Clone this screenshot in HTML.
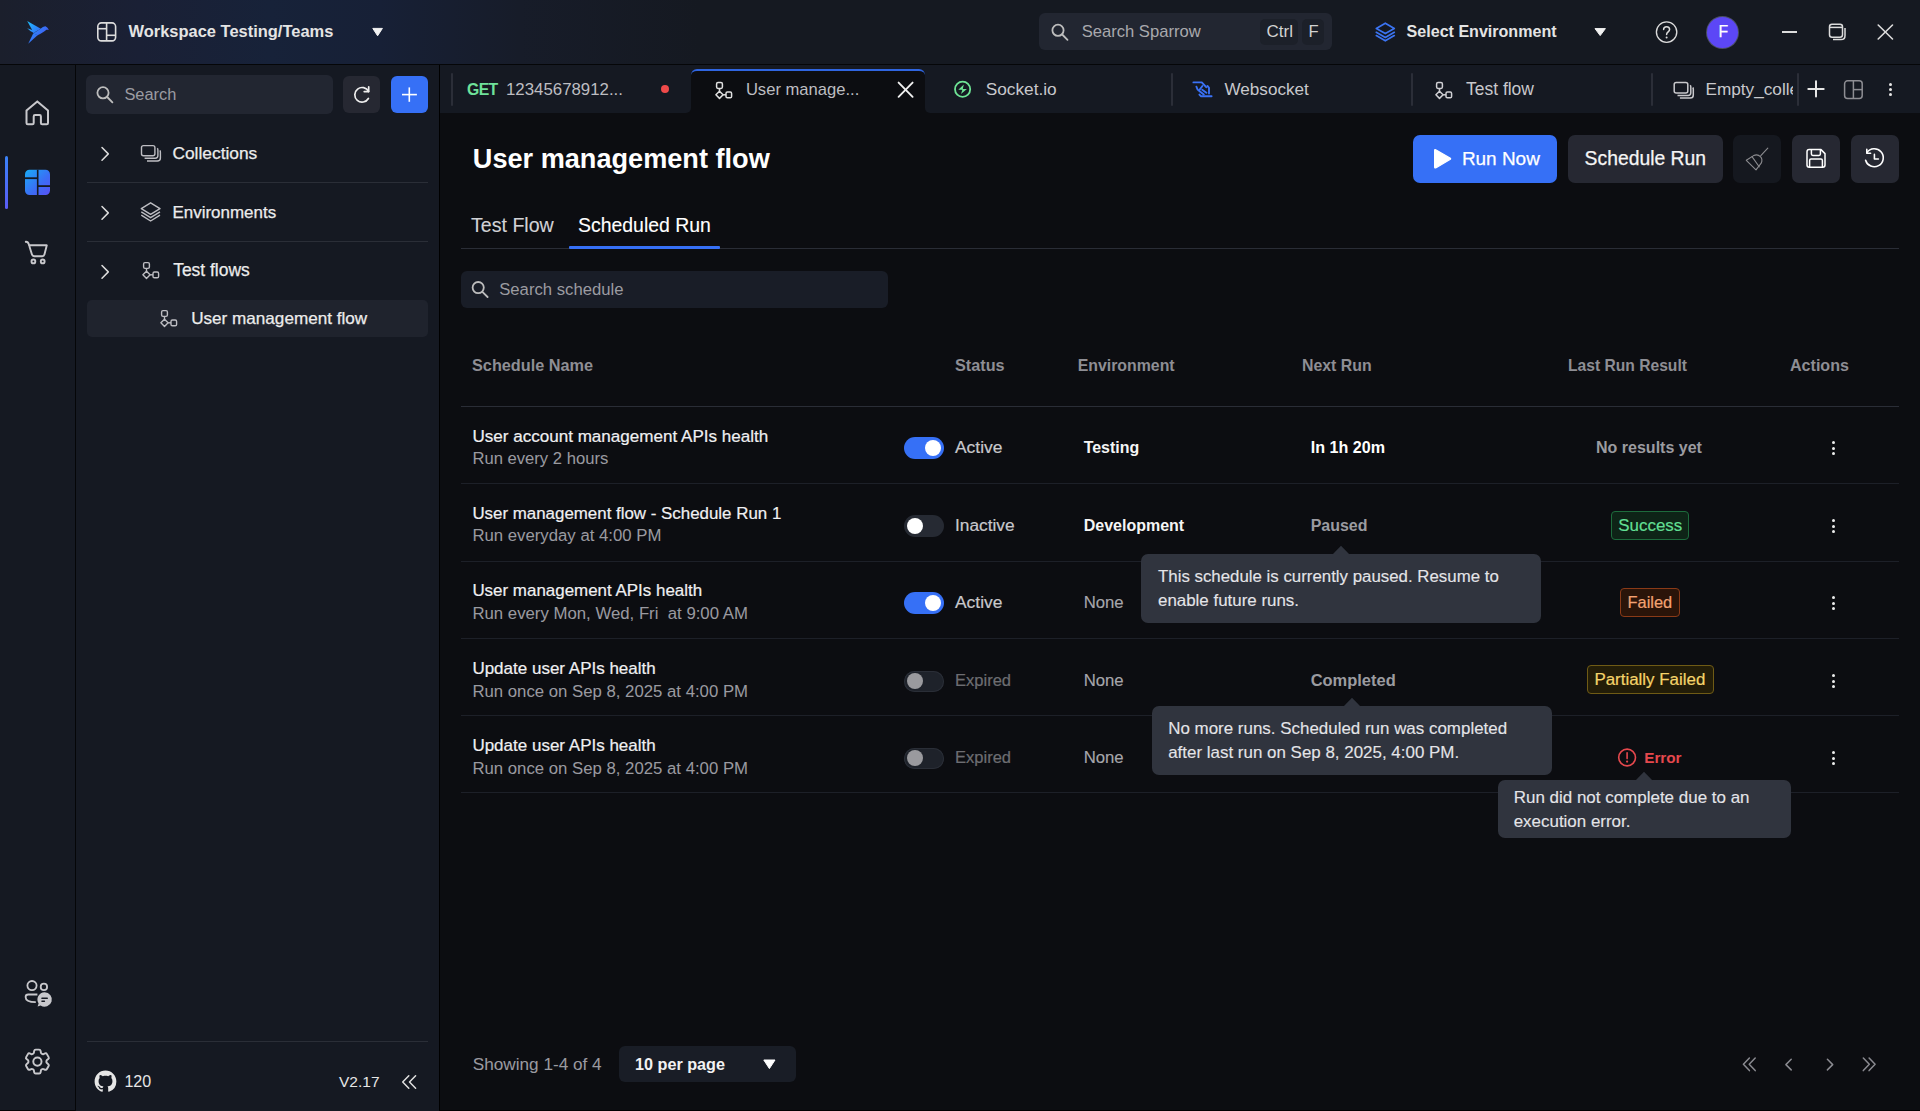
<!DOCTYPE html>
<html><head><meta charset="utf-8"><title>Sparrow</title>
<style>
html,body{margin:0;padding:0;width:1920px;height:1111px;overflow:hidden;background:#0c0d11;font-family:"Liberation Sans", sans-serif;}
.t{position:absolute;white-space:nowrap;line-height:1;font-family:"Liberation Sans", sans-serif;}
.r{position:absolute;}
.s{position:absolute;overflow:visible;}
</style></head><body>
<div class="r" style="left:0px;top:0px;width:1920px;height:64px;background:linear-gradient(90deg,#1b1f2c 0px,#1a2035 140px,#172239 270px,#172036 380px,#171c29 520px,#151921 700px,#151921 100%);border-radius:0px;"></div>
<div class="r" style="left:0px;top:64px;width:1920px;height:1px;background:#050608;border-radius:0px;"></div>
<div class="r" style="left:0px;top:65px;width:75px;height:1046px;background:#151922;border-radius:0px;"></div>
<div class="r" style="left:75px;top:65px;width:1px;height:1046px;background:#050608;border-radius:0px;"></div>
<div class="r" style="left:0px;top:1110px;width:75px;height:1px;background:#030405;border-radius:0px;"></div>
<div class="r" style="left:76px;top:65px;width:363px;height:1046px;background:#151922;border-radius:0px;"></div>
<div class="r" style="left:439px;top:65px;width:1px;height:1046px;background:#000000;border-radius:0px;"></div>
<div class="r" style="left:440px;top:65px;width:251px;height:48px;background:#151922;border-radius:0px;border-radius:0 0 5px 0"></div>
<div class="r" style="left:925px;top:65px;width:995px;height:48px;background:#151922;border-radius:0px;border-radius:0 0 0 5px"></div>
<div class="r" style="left:691px;top:65px;width:234px;height:16px;background:#151922;border-radius:0px;"></div>
<div class="r" style="left:440px;top:113px;width:1480px;height:998px;background:#0c0d11;border-radius:0px;"></div>
<div class="r" style="left:440px;top:1110px;width:1480px;height:1px;background:#000000;border-radius:0px;"></div>
<svg class="s" style="left:20px;top:15px;" width="40" height="35" viewBox="0 0 40 35" fill="none"><defs><linearGradient id="bg1" gradientUnits="userSpaceOnUse" x1="27" y1="21" x2="47" y2="38"><stop offset="0" stop-color="#1cc4ff"/><stop offset="0.5" stop-color="#2f7ff8"/><stop offset="1" stop-color="#4a52f3"/></linearGradient></defs>
<g fill="url(#bg1)" transform="translate(-20,-15)">
<path d="M27.2 21.1 L40.8 28.7 L36 31.6 L33.8 32.9 Z"/>
<path d="M27.2 28.2 L35.2 30.9 L33.8 33.1 Q30 31.2 27.2 28.2 Z"/>
<path d="M33.2 33.6 L40.6 28.8 Q43 26.1 45.4 26.2 Q47.3 26.7 48.9 29.7 L46.3 29.8 Q44 32.2 37.6 35.2 Z"/>
<path d="M33.2 33.4 L37.8 35.1 L28.2 43.8 Z"/>
</g></svg>
<svg class="s" style="left:96px;top:21px;" width="22" height="22" viewBox="0 0 22 22" fill="none"><g stroke="#dcdcdc" stroke-width="1.6" transform="translate(-96,-21)"><rect x="97.8" y="22.9" width="17.8" height="18" rx="3.6"/><line x1="106.6" y1="22.9" x2="106.6" y2="40.9"/><line x1="97.8" y1="28.7" x2="106.6" y2="28.7"/><line x1="106.6" y1="35.3" x2="115.6" y2="35.3"/></g></svg>
<div class="t" style="left:128.5px;top:23px;font-size:16.47px;font-weight:700;color:#e4e4e4;">Workspace Testing/Teams</div>
<svg class="s" style="left:371px;top:27px;" width="13" height="10" viewBox="0 0 13 10" fill="none"><path d="M1.8 1.4 H11.4 L6.6 8.8 Z" fill="#f2f2f2" stroke="#f2f2f2" stroke-width="1" stroke-linejoin="round"/></svg>
<div class="r" style="left:1039px;top:13px;width:293px;height:37px;background:#222631;border-radius:6px;"></div>
<svg class="s" style="left:1050px;top:22px;" width="20" height="20" viewBox="0 0 20 20" fill="none"><g stroke="#bdbdbd" stroke-width="1.8" stroke-linecap="round"><circle cx="8" cy="8.3" r="5.6"/><line x1="12.2" y1="12.5" x2="17.5" y2="17.8"/></g></svg>
<div class="t" style="left:1081.7px;top:24px;font-size:16.60px;font-weight:400;color:#a9a9ad;">Search Sparrow</div>
<div class="r" style="left:1260px;top:19px;width:38px;height:26px;background:#1c2029;border-radius:5px;"></div>
<div class="r" style="left:1302px;top:19px;width:22px;height:26px;background:#1c2029;border-radius:5px;"></div>
<div class="t" style="left:1266.5px;top:23px;font-size:17.00px;font-weight:400;color:#d2d2d2;">Ctrl</div>
<div class="t" style="left:1308.5px;top:24px;font-size:16.60px;font-weight:400;color:#d2d2d2;">F</div>
<svg class="s" style="left:1372px;top:19px;" width="26" height="26" viewBox="0 0 26 26" fill="none"><g stroke="#3b74f2" stroke-width="1.7" stroke-linejoin="round" stroke-linecap="round" transform="translate(-1372,-19)"><path d="M1385.3 23.2 L1394.3 28.4 L1385.3 33.6 L1376.3 28.4 Z"/><path d="M1376.3 32.3 L1385.3 37.5 L1394.3 32.3"/><path d="M1376.3 35.6 L1385.3 40.8 L1394.3 35.6"/></g></svg>
<div class="t" style="left:1406.6px;top:23px;font-size:16.07px;font-weight:700;color:#e4e4e4;">Select Environment</div>
<svg class="s" style="left:1593px;top:27px;" width="14" height="10" viewBox="0 0 14 10" fill="none"><path d="M2 1.6 H12.4 L7.2 8.6 Z" fill="#f2f2f2" stroke="#f2f2f2" stroke-width="1" stroke-linejoin="round"/></svg>
<svg class="s" style="left:1653px;top:19px;" width="27" height="27" viewBox="0 0 27 27" fill="none"><circle cx="13.6" cy="13.1" r="10.2" stroke="#dcdcdc" stroke-width="1.35"/><path d="M10.6 10.6 C10.6 6.9 16.6 6.9 16.6 10.6 C16.6 12.8 13.6 13 13.6 15.4" stroke="#dcdcdc" stroke-width="1.5" fill="none" stroke-linecap="round"/><circle cx="13.6" cy="18.4" r="1" fill="#dcdcdc"/></svg>
<div class="r" style="left:1707px;top:16.5px;width:31px;height:31px;border-radius:50%;background:#5c47f6;box-shadow:0 0 0 1px #4b4f66"></div>
<div class="t" style="left:1718.6px;top:24px;font-size:15.80px;font-weight:400;color:#ffffff;-webkit-text-stroke:0.25px #ffffff;">F</div>
<div class="r" style="left:1782px;top:31px;width:15px;height:1.6px;background:#dcdcdc;border-radius:0px;"></div>
<svg class="s" style="left:1826px;top:22px;" width="22" height="20" viewBox="0 0 22 20" fill="none"><g stroke="#dcdcdc" stroke-width="1.5" transform="translate(-1826,-22)"><rect x="1829.5" y="24.3" width="13" height="13" rx="2.5"/><line x1="1829.5" y1="27.4" x2="1842.5" y2="27.4"/><path d="M1845 28 V35.5 Q1845 39.6 1841 39.6 H1833"/></g></svg>
<svg class="s" style="left:1875px;top:22px;" width="20" height="20" viewBox="0 0 20 20" fill="none"><g stroke="#dcdcdc" stroke-width="1.6" stroke-linecap="round" transform="translate(-1875,-22)"><line x1="1878.2" y1="25" x2="1892.5" y2="39"/><line x1="1892.5" y1="25" x2="1878.2" y2="39"/></g></svg>
<svg class="s" style="left:20px;top:96px;" width="34" height="34" viewBox="0 0 34 34" fill="none"><path transform="translate(-20,-96)" d="M26.5 110.6 L37.3 101.4 L48 110.6 V123 Q48 124.3 46.7 124.3 H42.2 Q40.9 124.3 40.9 123 V116.4 Q40.9 115.1 39.6 115.1 H35 Q33.7 115.1 33.7 116.4 V123 Q33.7 124.3 32.4 124.3 H27.8 Q26.5 124.3 26.5 123 Z" stroke="#c8c8cc" stroke-width="2" stroke-linejoin="round"/></svg>
<div class="r" style="left:5px;top:156px;width:3px;height:53px;border-radius:2px;background:linear-gradient(180deg,#3a82f7,#5a5cf5)"></div>
<svg class="s" style="left:24px;top:169px;" width="28" height="28" viewBox="0 0 28 28" fill="none"><defs><linearGradient id="g2" x1="0" y1="0" x2="1" y2="1"><stop offset="0" stop-color="#16b0f6"/><stop offset="0.55" stop-color="#3b6ef5"/><stop offset="1" stop-color="#5e4cf5"/></linearGradient>
<clipPath id="c2"><rect x="1" y="0.8" width="25" height="25.2" rx="4.5"/></clipPath></defs>
<g clip-path="url(#c2)"><rect x="0" y="0" width="28" height="28" fill="url(#g2)"/>
<rect x="12.9" y="0" width="1.6" height="28" fill="#151922"/><rect x="0" y="8.3" width="13" height="1.8" fill="#151922"/><rect x="14" y="16.2" width="14" height="1.8" fill="#151922"/></g></svg>
<svg class="s" style="left:22px;top:238px;" width="30" height="28" viewBox="0 0 30 28" fill="none"><g transform="translate(-22,-238)" stroke="#c8c8cc" stroke-width="1.9" stroke-linecap="round" stroke-linejoin="round"><path d="M25.8 241.8 Q28 241.6 28.7 244 L31.8 254 Q32.5 256.2 34.6 256.2 H42.3 Q44 256.2 44.5 254.3 L46.8 245.3 H29"/><circle cx="33.4" cy="261.4" r="1.9"/><circle cx="42.7" cy="261.4" r="1.9"/></g></svg>
<svg class="s" style="left:22px;top:976px;" width="32" height="34" viewBox="0 0 32 34" fill="none"><g transform="translate(-22,-976)"><g stroke="#c8c8cc" stroke-width="1.8" fill="none"><circle cx="32" cy="985.6" r="4.6"/><circle cx="43.9" cy="986.9" r="3.2"/><path d="M37.4 994.5 H28.2 Q25.6 994.5 25.6 997 Q25.6 1002.2 35.8 1002.2"/></g>
<path d="M44.6 992.2 A7.3 7.3 0 1 1 40.6 1005.6 L37.6 1006.6 L38.6 1003.4 A7.3 7.3 0 0 1 44.6 992.2 Z" fill="#c8c8cc"/>
<rect x="41.3" y="997.6" width="6.6" height="1.5" rx="0.6" fill="#151922"/><rect x="41.3" y="1000.4" width="3.8" height="1.5" rx="0.6" fill="#151922"/></g></svg>
<svg class="s" style="left:22px;top:1046px;" width="31" height="31" viewBox="0 0 31 31" fill="none"><g transform="translate(-0.56,-0.36) scale(1.33)" stroke="#c8c8cc" stroke-width="1.45" stroke-linejoin="round" fill="none"><path d="M9.594 3.94c.09-.542.56-.94 1.11-.94h2.593c.55 0 1.02.398 1.11.94l.213 1.281c.063.374.313.686.645.87.074.04.147.083.22.127.325.196.72.257 1.075.124l1.217-.456a1.125 1.125 0 0 1 1.37.49l1.296 2.247a1.125 1.125 0 0 1-.26 1.431l-1.003.827c-.293.241-.438.613-.43.992a7.723 7.723 0 0 1 0 .255c-.008.378.137.75.43.991l1.004.827c.424.35.534.955.26 1.43l-1.298 2.247a1.125 1.125 0 0 1-1.369.491l-1.217-.456c-.355-.133-.75-.072-1.076.124a6.47 6.47 0 0 1-.22.128c-.331.183-.581.495-.644.869l-.213 1.281c-.09.543-.56.94-1.11.94h-2.594c-.55 0-1.019-.398-1.11-.94l-.213-1.281c-.062-.374-.312-.686-.644-.87a6.52 6.52 0 0 1-.22-.127c-.325-.196-.72-.257-1.076-.124l-1.217.456a1.125 1.125 0 0 1-1.369-.49l-1.297-2.247a1.125 1.125 0 0 1 .26-1.431l1.004-.827c.292-.24.437-.613.43-.991a6.932 6.932 0 0 1 0-.255c.007-.38-.138-.751-.43-.992l-1.004-.827a1.125 1.125 0 0 1-.26-1.43l1.297-2.247a1.125 1.125 0 0 1 1.37-.491l1.216.456c.356.133.751.072 1.076-.124.072-.044.146-.086.22-.128.332-.183.582-.495.644-.869l.214-1.28Z"/><circle cx="12" cy="12" r="3.1"/></g></svg>
<div class="r" style="left:86px;top:75px;width:247px;height:39px;background:#222631;border-radius:6px;"></div>
<svg class="s" style="left:94px;top:84px;" width="22" height="22" viewBox="0 0 22 22" fill="none"><g stroke="#bdbdbd" stroke-width="1.8" stroke-linecap="round"><circle cx="9" cy="8.8" r="5.6"/><line x1="13.2" y1="13" x2="18.4" y2="18.3"/></g></svg>
<div class="t" style="left:124.4px;top:86px;font-size:16.41px;font-weight:400;color:#9b9ba1;">Search</div>
<div class="r" style="left:343px;top:76px;width:37px;height:37px;background:#262832;border-radius:6px;"></div>
<svg class="s" style="left:351px;top:84px;" width="20" height="20" viewBox="0 0 20 20" fill="none"><g transform="translate(-351,-84)" stroke="#eeeeee" stroke-width="1.7" fill="none" stroke-linecap="round"><path d="M368.6 91.5 A7.3 7.3 0 1 0 368.4 98.5"/><path d="M368.7 86.8 V91.6 H364.2" stroke-linejoin="round"/></g></svg>
<div class="r" style="left:391px;top:76px;width:37px;height:37px;background:#3670f6;border-radius:6px;"></div>
<svg class="s" style="left:400px;top:85px;" width="19" height="19" viewBox="0 0 19 19" fill="none"><g stroke="#ffffff" stroke-width="1.6"><line x1="9.3" y1="2.4" x2="9.3" y2="16.8"/><line x1="2" y1="9.6" x2="16.9" y2="9.6"/></g></svg>
<svg class="s" style="left:100px;top:145.5px;" width="12" height="16" viewBox="0 0 12 16" fill="none"><path d="M2 1.5 L8.3 7.9 L2 14.3" stroke="#dcdcdc" stroke-width="1.5" fill="none" stroke-linecap="round" stroke-linejoin="round"/></svg>
<svg class="s" style="left:139px;top:143px;" width="24" height="21" viewBox="0 0 24 21" fill="none"><g transform="translate(-139,-143)" stroke="#bdbdc2" stroke-width="1.4" fill="none"><rect x="141.5" y="145.6" width="13.4" height="10.2" rx="2"/><path d="M157.3 148.2 Q157.9 148.9 157.9 150 V155.6 Q157.9 158.3 155.2 158.3 H144.6"/><path d="M159.9 150.4 Q160.4 151.2 160.4 152.2 V157.9 Q160.4 161 157.3 161 H147"/></g></svg>
<div class="t" style="left:172.4px;top:145px;font-size:17.38px;font-weight:400;color:#ececec;-webkit-text-stroke:0.25px #ececec;">Collections</div>
<div class="r" style="left:87px;top:182px;width:341px;height:1px;background:#2a2e37;border-radius:0px;"></div>
<svg class="s" style="left:100px;top:204.5px;" width="12" height="16" viewBox="0 0 12 16" fill="none"><path d="M2 1.5 L8.3 7.9 L2 14.3" stroke="#dcdcdc" stroke-width="1.5" fill="none" stroke-linecap="round" stroke-linejoin="round"/></svg>
<svg class="s" style="left:139px;top:200px;" width="24" height="24" viewBox="0 0 24 24" fill="none"><g transform="translate(-139,-200)" stroke="#bdbdc2" stroke-width="1.4" fill="none" stroke-linejoin="round"><path d="M150.6 202.8 L160 208.6 L150.6 214.4 L141.3 208.6 Z"/><path d="M141.3 211.9 L150.6 217.7 L160 211.9"/><path d="M141.3 215.2 L150.6 221 L160 215.2"/></g></svg>
<div class="t" style="left:172.4px;top:204px;font-size:16.98px;font-weight:400;color:#ececec;-webkit-text-stroke:0.25px #ececec;">Environments</div>
<div class="r" style="left:87px;top:241px;width:341px;height:1px;background:#2a2e37;border-radius:0px;"></div>
<svg class="s" style="left:100px;top:263.5px;" width="12" height="16" viewBox="0 0 12 16" fill="none"><path d="M2 1.5 L8.3 7.9 L2 14.3" stroke="#dcdcdc" stroke-width="1.5" fill="none" stroke-linecap="round" stroke-linejoin="round"/></svg>
<svg class="s" style="left:139.6px;top:260.4px;" width="22" height="22" viewBox="0 0 22 22" fill="none"><g transform="translate(-139.6,-260.4)" stroke="#bdbdc2" stroke-width="1.4" fill="none"><rect x="143.2" y="263.0" width="5.8" height="5.8" rx="1.4"/><line x1="146.1" y1="268.79999999999995" x2="146.1" y2="271.7"/><path d="M146.1 271.59999999999997 L149.7 275.2 L146.1 278.79999999999995 L142.5 275.2 Z" stroke-linejoin="round"/><line x1="149.7" y1="275.2" x2="152.6" y2="275.2"/><rect x="152.6" y="272.4" width="5.6" height="5.8" rx="1.4"/></g></svg>
<div class="t" style="left:173.2px;top:262px;font-size:17.43px;font-weight:400;color:#ececec;-webkit-text-stroke:0.25px #ececec;">Test flows</div>
<div class="r" style="left:87px;top:300px;width:341px;height:37px;background:#1f232d;border-radius:5px;"></div>
<svg class="s" style="left:158.2px;top:308.2px;" width="22" height="22" viewBox="0 0 22 22" fill="none"><g transform="translate(-158.2,-308.2)" stroke="#bdbdc2" stroke-width="1.4" fill="none"><rect x="161.79999999999998" y="310.8" width="5.8" height="5.8" rx="1.4"/><line x1="164.7" y1="316.59999999999997" x2="164.7" y2="319.5"/><path d="M164.7 319.4 L168.29999999999998 323.0 L164.7 326.59999999999997 L161.1 323.0 Z" stroke-linejoin="round"/><line x1="168.29999999999998" y1="323.0" x2="171.2" y2="323.0"/><rect x="171.2" y="320.2" width="5.6" height="5.8" rx="1.4"/></g></svg>
<div class="t" style="left:191.2px;top:310px;font-size:17.12px;font-weight:400;color:#ececec;-webkit-text-stroke:0.25px #ececec;">User management flow</div>
<div class="r" style="left:87px;top:1041px;width:341px;height:1px;background:#2a2e37;border-radius:0px;"></div>
<svg class="s" style="left:94px;top:1070px;" width="23" height="23" viewBox="0 0 23 23" fill="none"><g transform="translate(0.6,0.6) scale(1.36)"><path fill="#e6e6e6" d="M8 0C3.58 0 0 3.58 0 8c0 3.54 2.29 6.53 5.47 7.59.4.07.55-.17.55-.38 0-.19-.01-.82-.01-1.49-2.01.37-2.53-.49-2.69-.94-.09-.23-.48-.94-.82-1.13-.28-.15-.68-.52-.01-.53.63-.01 1.08.58 1.23.82.72 1.21 1.87.87 2.33.66.07-.52.28-.87.51-1.07-1.78-.2-3.64-.89-3.64-3.95 0-.87.31-1.59.82-2.15-.08-.2-.36-1.02.08-2.12 0 0 .67-.21 2.2.82.64-.18 1.32-.27 2-.27.68 0 1.36.09 2 .27 1.53-1.04 2.2-.82 2.2-.82.44 1.1.16 1.92.08 2.12.51.56.82 1.27.82 2.15 0 3.07-1.87 3.75-3.65 3.95.29.25.54.73.54 1.48 0 1.07-.01 1.93-.01 2.2 0 .21.15.46.55.38A8.013 8.013 0 0016 8c0-4.42-3.58-8-8-8z"/></g></svg>
<div class="t" style="left:124.4px;top:1073px;font-size:16.06px;font-weight:400;color:#e6e6e6;">120</div>
<div class="t" style="left:339.0px;top:1074px;font-size:15.50px;font-weight:400;color:#e6e6e6;">V2.17</div>
<svg class="s" style="left:400px;top:1073px;" width="18" height="18" viewBox="0 0 18 18" fill="none"><g transform="translate(-400,-1073)" stroke="#e0e0e0" stroke-width="1.5" fill="none" stroke-linecap="round" stroke-linejoin="round"><path d="M408.8 1075.8 L402.7 1082 L408.8 1088.2"/><path d="M415.6 1075.8 L409.5 1082 L415.6 1088.2"/></g></svg>
<div class="r" style="left:451px;top:73px;width:2px;height:33px;background:#2b2e38;border-radius:1px;"></div>
<div class="t" style="left:467.0px;top:82px;font-size:15.80px;font-weight:700;color:#6fe29a;letter-spacing:-0.6px;">GET</div>
<div class="t" style="left:506.0px;top:82px;font-size:16.83px;font-weight:400;color:#bdbdc1;">12345678912...</div>
<div class="r" style="left:661px;top:85px;width:8px;height:8px;border-radius:50%;background:#ef4a4a"></div>
<div class="r" style="left:691px;top:69px;width:234px;height:44px;background:#0c0d11;border-radius:6px 6px 0 0;border-top:2px solid #2f65e0;box-sizing:border-box"></div>
<svg class="s" style="left:713.2px;top:79.8px;" width="22" height="22" viewBox="0 0 22 22" fill="none"><g transform="translate(-713.2,-79.8)" stroke="#e0e0e0" stroke-width="1.5" fill="none"><rect x="716.8000000000001" y="82.39999999999999" width="5.8" height="5.8" rx="1.4"/><line x1="719.7" y1="88.2" x2="719.7" y2="91.1"/><path d="M719.7 91.0 L723.3000000000001 94.6 L719.7 98.19999999999999 L716.1 94.6 Z" stroke-linejoin="round"/><line x1="723.3000000000001" y1="94.6" x2="726.2" y2="94.6"/><rect x="726.2" y="91.8" width="5.6" height="5.8" rx="1.4"/></g></svg>
<div class="t" style="left:745.9px;top:82px;font-size:16.60px;font-weight:400;color:#bdbdc1;">User manage...</div>
<svg class="s" style="left:894px;top:79px;" width="22" height="22" viewBox="0 0 22 22" fill="none"><g stroke="#f0f0f0" stroke-width="1.9" stroke-linecap="round"><line x1="4.6" y1="3.6" x2="18.6" y2="17.8"/><line x1="18.6" y1="3.6" x2="4.6" y2="17.8"/></g></svg>
<svg class="s" style="left:952px;top:79px;" width="22" height="22" viewBox="0 0 22 22" fill="none"><g transform="translate(-952,-79)"><circle cx="962.6" cy="89.2" r="7.6" stroke="#6ee495" stroke-width="1.8" fill="none"/><path d="M963.8 84.6 L958.3 89.8 H962.4 L961 94 L966.9 89.1 H962.8 Z" fill="#6ee495"/></g></svg>
<div class="t" style="left:985.7px;top:81px;font-size:17.26px;font-weight:400;color:#c8c8cc;">Socket.io</div>
<div class="r" style="left:1171px;top:73px;width:2px;height:33px;background:#2b2e38;border-radius:1px;"></div>
<svg class="s" style="left:1190px;top:79px;" width="24" height="22" viewBox="0 0 24 22" fill="none"><g transform="translate(-1190,-79)" stroke="#3a72f6" stroke-width="1.9" fill="none" stroke-linejoin="round" stroke-linecap="round"><path d="M1193.4 82.4 H1201.8 L1206.2 87.2"/><path d="M1196.4 86.6 Q1196.8 89.2 1199.6 91.2 L1203.8 94.4"/><path d="M1202.4 86 L1199.4 90"/><path d="M1202.2 89.8 L1206.4 92.8"/><path d="M1207.4 85.9 L1209 87.9 V93.6"/><path d="M1199.4 94.6 L1201.1 96.3 H1211.6"/></g></svg>
<div class="t" style="left:1224.5px;top:81px;font-size:17.13px;font-weight:400;color:#c8c8cc;">Websocket</div>
<div class="r" style="left:1411px;top:73px;width:2px;height:33px;background:#2b2e38;border-radius:1px;"></div>
<svg class="s" style="left:1433.2px;top:79.8px;" width="22" height="22" viewBox="0 0 22 22" fill="none"><g transform="translate(-1433.2,-79.8)" stroke="#d0d0d4" stroke-width="1.5" fill="none"><rect x="1436.8" y="82.39999999999999" width="5.8" height="5.8" rx="1.4"/><line x1="1439.7" y1="88.2" x2="1439.7" y2="91.1"/><path d="M1439.7 91.0 L1443.3 94.6 L1439.7 98.19999999999999 L1436.1000000000001 94.6 Z" stroke-linejoin="round"/><line x1="1443.3" y1="94.6" x2="1446.2" y2="94.6"/><rect x="1446.2" y="91.8" width="5.6" height="5.8" rx="1.4"/></g></svg>
<div class="t" style="left:1466.0px;top:81px;font-size:17.48px;font-weight:400;color:#c8c8cc;">Test flow</div>
<div class="r" style="left:1651px;top:73px;width:2px;height:33px;background:#2b2e38;border-radius:1px;"></div>
<svg class="s" style="left:1670px;top:79px;" width="26" height="22" viewBox="0 0 26 22" fill="none"><g transform="translate(-1670,-79)" stroke="#c8c8cc" stroke-width="1.5" fill="none"><rect x="1674.2" y="82.6" width="13.6" height="10.4" rx="2"/><path d="M1690.2 85.2 Q1690.8 85.9 1690.8 87 V92.7 Q1690.8 95.4 1688.1 95.4 H1677.5"/><path d="M1692.8 87.5 Q1693.3 88.3 1693.3 89.3 V95 Q1693.3 98.1 1690.2 98.1 H1679.9"/></g></svg>
<div style="position:absolute;left:1705.5px;top:80px;width:87px;height:22px;overflow:hidden">
<div class="t" style="left:0.0px;top:1px;font-size:17.20px;font-weight:400;color:#c8c8cc;">Empty_collection</div>
</div>
<div class="r" style="left:1797px;top:73px;width:2px;height:33px;background:#2b2e38;border-radius:1px;"></div>
<svg class="s" style="left:1806px;top:79px;" width="20" height="20" viewBox="0 0 20 20" fill="none"><g stroke="#e6e6e6" stroke-width="2" stroke-linecap="round"><line x1="10" y1="2.3" x2="10" y2="17.6"/><line x1="2.3" y1="10" x2="17.7" y2="10"/></g></svg>
<svg class="s" style="left:1842px;top:79px;" width="22" height="22" viewBox="0 0 22 22" fill="none"><g stroke="#8d8d93" stroke-width="1.5" fill="none"><rect x="2.6" y="1.8" width="17.6" height="17.6" rx="3"/><line x1="11.4" y1="1.8" x2="11.4" y2="19.4"/><line x1="11.4" y1="10.6" x2="20.2" y2="10.6"/></g></svg>
<div class="r" style="left:1888.6px;top:82.7px;width:3.4px;height:3.4px;border-radius:50%;background:#e6e6e6"></div>
<div class="r" style="left:1888.6px;top:87.8px;width:3.4px;height:3.4px;border-radius:50%;background:#e6e6e6"></div>
<div class="r" style="left:1888.6px;top:92.9px;width:3.4px;height:3.4px;border-radius:50%;background:#e6e6e6"></div>
<div class="t" style="left:472.8px;top:145px;font-size:27.13px;font-weight:700;color:#ffffff;">User management flow</div>
<div class="r" style="left:1413px;top:135px;width:144px;height:48px;background:#3670f6;border-radius:7px;"></div>
<svg class="s" style="left:1430px;top:147px;" width="24" height="24" viewBox="0 0 24 24" fill="none"><path transform="translate(-1430,-147)" d="M1434.6 150.7 Q1434.6 149 1436.1 149.9 L1450 158 Q1451.3 158.8 1450 159.6 L1436.1 167.7 Q1434.6 168.6 1434.6 166.9 Z" fill="#ffffff" stroke="#ffffff" stroke-width="1.2" stroke-linejoin="round"/></svg>
<div class="t" style="left:1461.9px;top:150px;font-size:18.97px;font-weight:400;color:#ffffff;-webkit-text-stroke:0.25px #ffffff;">Run Now</div>
<div class="r" style="left:1568px;top:135px;width:155px;height:48px;background:#262832;border-radius:7px;"></div>
<div class="t" style="left:1584.6px;top:149px;font-size:19.34px;font-weight:400;color:#f5f5f5;-webkit-text-stroke:0.25px #f5f5f5;">Schedule Run</div>
<div class="r" style="left:1733px;top:135px;width:48px;height:48px;background:#15181f;border-radius:7px;"></div>
<svg class="s" style="left:1743px;top:145px;" width="28" height="28" viewBox="0 0 28 28" fill="none"><g transform="translate(-1743,-145)" stroke="#8c8c90" stroke-width="1.1" fill="none" stroke-linejoin="round" stroke-linecap="round"><line x1="1767.8" y1="148.2" x2="1760.8" y2="155.6"/><path d="M1746.3 160.3 L1753.6 155.6 Q1757.6 153.8 1760.4 156.6 Q1763 159.4 1761.2 163.2 L1756 169.8 Z"/><line x1="1752" y1="156.6" x2="1759.2" y2="166.8"/></g></svg>
<div class="r" style="left:1792px;top:135px;width:48px;height:48px;background:#262832;border-radius:7px;"></div>
<svg class="s" style="left:1803px;top:145px;" width="26" height="26" viewBox="0 0 26 26" fill="none"><g transform="translate(-1803,-145)" stroke="#ffffff" stroke-width="1.5" fill="none" stroke-linejoin="round"><path d="M1809.2 149.6 H1821 L1825 153.6 V165 Q1825 167.2 1822.8 167.2 H1809.2 Q1807 167.2 1807 165 V151.8 Q1807 149.6 1809.2 149.6 Z"/><path d="M1811.4 149.8 V154 Q1811.4 155.4 1812.8 155.4 H1819 Q1820.4 155.4 1820.4 154 V149.8"/><path d="M1809.6 167 V160.4 Q1809.6 159 1811 159 H1821 Q1822.4 159 1822.4 160.4 V167"/></g></svg>
<div class="r" style="left:1851px;top:135px;width:48px;height:48px;background:#262832;border-radius:7px;"></div>
<svg class="s" style="left:1862px;top:145px;" width="26" height="26" viewBox="0 0 26 26" fill="none"><g transform="translate(-1862,-145)" stroke="#ffffff" stroke-width="1.6" fill="none" stroke-linecap="round" stroke-linejoin="round"><path d="M1866.9 152.6 A9 9 0 1 1 1865.6 160.2"/><path d="M1866.8 149.4 V153.2 H1870.6"/><path d="M1874.4 154.4 V159 H1878.4"/></g></svg>
<div class="t" style="left:471.0px;top:216px;font-size:19.60px;font-weight:400;color:#d2d2d6;-webkit-text-stroke:0.12px #d2d2d6;">Test Flow</div>
<div class="t" style="left:578.0px;top:216px;font-size:19.45px;font-weight:400;color:#ffffff;-webkit-text-stroke:0.12px #ffffff;">Scheduled Run</div>
<div class="r" style="left:461px;top:248px;width:1438px;height:1px;background:#2a2d36;border-radius:0px;"></div>
<div class="r" style="left:569px;top:246px;width:151px;height:3px;background:#3670f6;border-radius:1px;"></div>
<div class="r" style="left:461px;top:271px;width:427px;height:37px;background:#191d27;border-radius:6px;"></div>
<svg class="s" style="left:469px;top:279px;" width="22" height="22" viewBox="0 0 22 22" fill="none"><g stroke="#bdbdbd" stroke-width="1.8" stroke-linecap="round"><circle cx="9.2" cy="8.6" r="5.6"/><line x1="13.4" y1="12.8" x2="18.6" y2="18"/></g></svg>
<div class="t" style="left:499.2px;top:282px;font-size:16.69px;font-weight:400;color:#9b9ba1;">Search schedule</div>
<div class="t" style="left:472.0px;top:357px;font-size:16.25px;font-weight:700;color:#8e8e94;">Schedule Name</div>
<div class="t" style="left:955.0px;top:357px;font-size:16.23px;font-weight:700;color:#8e8e94;">Status</div>
<div class="t" style="left:1077.7px;top:358px;font-size:15.87px;font-weight:700;color:#8e8e94;">Environment</div>
<div class="t" style="left:1302.0px;top:358px;font-size:15.86px;font-weight:700;color:#8e8e94;">Next Run</div>
<div class="t" style="left:1568.0px;top:358px;font-size:15.63px;font-weight:700;color:#8e8e94;">Last Run Result</div>
<div class="t" style="left:1790.0px;top:357px;font-size:16.09px;font-weight:700;color:#8e8e94;">Actions</div>
<div class="r" style="left:461px;top:406px;width:1438px;height:1px;background:#2a2d36;border-radius:0px;"></div>
<div class="t" style="left:472.4px;top:428px;font-size:17.07px;font-weight:400;color:#f0f0f2;-webkit-text-stroke:0.2px #f0f0f2;">User account management APIs health</div>
<div class="t" style="left:472.4px;top:451px;font-size:16.64px;font-weight:400;color:#9a9aa0;-webkit-text-stroke:0.05px #9a9aa0;">Run every 2 hours</div>
<div class="r" style="left:904px;top:437.0px;width:40px;height:22px;border-radius:11px;background:#3670f6"></div>
<div class="r" style="left:925px;top:439.8px;width:16.4px;height:16.4px;border-radius:50%;background:#ffffff"></div>
<div class="t" style="left:955.0px;top:439px;font-size:17.41px;font-weight:400;color:#c8c8cc;-webkit-text-stroke:0.2px #c8c8cc;">Active</div>
<div class="t" style="left:1083.7px;top:440px;font-size:15.94px;font-weight:700;color:#f5f5f5;">Testing</div>
<div class="t" style="left:1310.7px;top:439px;font-size:16.11px;font-weight:700;color:#ffffff;">In 1h 20m</div>
<div class="r" style="left:1831.9px;top:440.9px;width:3.0px;height:3.0px;border-radius:50%;background:#ededed"></div>
<div class="r" style="left:1831.9px;top:446.5px;width:3.0px;height:3.0px;border-radius:50%;background:#ededed"></div>
<div class="r" style="left:1831.9px;top:452.1px;width:3.0px;height:3.0px;border-radius:50%;background:#ededed"></div>
<div class="r" style="left:461px;top:483px;width:1438px;height:1px;background:#1d2028;border-radius:0px;"></div>
<div class="t" style="left:472.4px;top:506px;font-size:16.90px;font-weight:400;color:#f0f0f2;-webkit-text-stroke:0.2px #f0f0f2;">User management flow - Schedule Run 1</div>
<div class="t" style="left:472.4px;top:528px;font-size:16.75px;font-weight:400;color:#9a9aa0;-webkit-text-stroke:0.05px #9a9aa0;">Run everyday at 4:00 PM</div>
<div class="r" style="left:904px;top:515.0px;width:40px;height:22px;border-radius:11px;background:#262a33"></div>
<div class="r" style="left:906.6px;top:517.8px;width:16.4px;height:16.4px;border-radius:50%;background:#ffffff"></div>
<div class="t" style="left:955.0px;top:517px;font-size:17.29px;font-weight:400;color:#c8c8cc;-webkit-text-stroke:0.2px #c8c8cc;">Inactive</div>
<div class="t" style="left:1083.7px;top:518px;font-size:16.00px;font-weight:700;color:#f5f5f5;">Development</div>
<div class="t" style="left:1310.7px;top:518px;font-size:15.97px;font-weight:700;color:#9b9ba0;">Paused</div>
<div class="r" style="left:1831.9px;top:518.9px;width:3.0px;height:3.0px;border-radius:50%;background:#ededed"></div>
<div class="r" style="left:1831.9px;top:524.5px;width:3.0px;height:3.0px;border-radius:50%;background:#ededed"></div>
<div class="r" style="left:1831.9px;top:530.1px;width:3.0px;height:3.0px;border-radius:50%;background:#ededed"></div>
<div class="r" style="left:461px;top:561px;width:1438px;height:1px;background:#1d2028;border-radius:0px;"></div>
<div class="t" style="left:472.4px;top:583px;font-size:16.96px;font-weight:400;color:#f0f0f2;-webkit-text-stroke:0.2px #f0f0f2;">User management APIs health</div>
<div class="t" style="left:472.4px;top:606px;font-size:16.77px;font-weight:400;color:#9a9aa0;-webkit-text-stroke:0.05px #9a9aa0;">Run every Mon, Wed, Fri&nbsp; at 9:00 AM</div>
<div class="r" style="left:904px;top:592.0px;width:40px;height:22px;border-radius:11px;background:#3670f6"></div>
<div class="r" style="left:925px;top:594.8px;width:16.4px;height:16.4px;border-radius:50%;background:#ffffff"></div>
<div class="t" style="left:955.0px;top:594px;font-size:17.41px;font-weight:400;color:#c8c8cc;-webkit-text-stroke:0.2px #c8c8cc;">Active</div>
<div class="t" style="left:1083.7px;top:595px;font-size:16.73px;font-weight:400;color:#a6a6ab;-webkit-text-stroke:0.15px #a6a6ab;">None</div>
<div class="r" style="left:1831.9px;top:595.9px;width:3.0px;height:3.0px;border-radius:50%;background:#ededed"></div>
<div class="r" style="left:1831.9px;top:601.5px;width:3.0px;height:3.0px;border-radius:50%;background:#ededed"></div>
<div class="r" style="left:1831.9px;top:607.1px;width:3.0px;height:3.0px;border-radius:50%;background:#ededed"></div>
<div class="r" style="left:461px;top:638px;width:1438px;height:1px;background:#1d2028;border-radius:0px;"></div>
<div class="t" style="left:472.4px;top:660px;font-size:17.01px;font-weight:400;color:#f0f0f2;-webkit-text-stroke:0.2px #f0f0f2;">Update user APIs health</div>
<div class="t" style="left:472.4px;top:684px;font-size:16.76px;font-weight:400;color:#9a9aa0;-webkit-text-stroke:0.05px #9a9aa0;">Run once on Sep 8, 2025 at 4:00 PM</div>
<div class="r" style="left:904px;top:670.5px;width:40px;height:21px;border-radius:11px;background:#1e222a;box-shadow:inset 0 0 0 1px #2a2e37"></div>
<div class="r" style="left:906.8px;top:673.1px;width:15.8px;height:15.8px;border-radius:50%;background:#9a9a9e"></div>
<div class="t" style="left:955.0px;top:673px;font-size:16.52px;font-weight:400;color:#6d6d72;-webkit-text-stroke:0.2px #6d6d72;">Expired</div>
<div class="t" style="left:1083.7px;top:673px;font-size:16.73px;font-weight:400;color:#a6a6ab;-webkit-text-stroke:0.15px #a6a6ab;">None</div>
<div class="t" style="left:1310.7px;top:672px;font-size:16.45px;font-weight:700;color:#9b9ba0;">Completed</div>
<div class="r" style="left:1831.9px;top:673.9px;width:3.0px;height:3.0px;border-radius:50%;background:#ededed"></div>
<div class="r" style="left:1831.9px;top:679.5px;width:3.0px;height:3.0px;border-radius:50%;background:#ededed"></div>
<div class="r" style="left:1831.9px;top:685.1px;width:3.0px;height:3.0px;border-radius:50%;background:#ededed"></div>
<div class="r" style="left:461px;top:715px;width:1438px;height:1px;background:#1d2028;border-radius:0px;"></div>
<div class="t" style="left:472.4px;top:737px;font-size:17.01px;font-weight:400;color:#f0f0f2;-webkit-text-stroke:0.2px #f0f0f2;">Update user APIs health</div>
<div class="t" style="left:472.4px;top:761px;font-size:16.76px;font-weight:400;color:#9a9aa0;-webkit-text-stroke:0.05px #9a9aa0;">Run once on Sep 8, 2025 at 4:00 PM</div>
<div class="r" style="left:904px;top:747.5px;width:40px;height:21px;border-radius:11px;background:#1e222a;box-shadow:inset 0 0 0 1px #2a2e37"></div>
<div class="r" style="left:906.8px;top:750.1px;width:15.8px;height:15.8px;border-radius:50%;background:#9a9a9e"></div>
<div class="t" style="left:955.0px;top:750px;font-size:16.52px;font-weight:400;color:#6d6d72;-webkit-text-stroke:0.2px #6d6d72;">Expired</div>
<div class="t" style="left:1083.7px;top:750px;font-size:16.73px;font-weight:400;color:#a6a6ab;-webkit-text-stroke:0.15px #a6a6ab;">None</div>
<div class="r" style="left:1831.9px;top:750.9px;width:3.0px;height:3.0px;border-radius:50%;background:#ededed"></div>
<div class="r" style="left:1831.9px;top:756.5px;width:3.0px;height:3.0px;border-radius:50%;background:#ededed"></div>
<div class="r" style="left:1831.9px;top:762.1px;width:3.0px;height:3.0px;border-radius:50%;background:#ededed"></div>
<div class="r" style="left:461px;top:792px;width:1438px;height:1px;background:#1d2028;border-radius:0px;"></div>
<div class="r" style="left:1611px;top:511px;width:78px;height:29px;background:#0e2417;border:1px solid #1d6b3c;border-radius:4px;box-sizing:border-box"></div>
<div class="t" style="left:1618.3px;top:518px;font-size:16.93px;font-weight:400;color:#62df93;-webkit-text-stroke:0.2px #62df93;">Success</div>
<div class="r" style="left:1620px;top:588px;width:60px;height:29px;background:#2a1409;border:1px solid #8a3a17;border-radius:4px;box-sizing:border-box"></div>
<div class="t" style="left:1627.5px;top:594px;font-size:16.40px;font-weight:400;color:#f3a272;-webkit-text-stroke:0.2px #f3a272;">Failed</div>
<div class="r" style="left:1587px;top:665px;width:127px;height:29px;background:#231d08;border:1px solid #6f5b15;border-radius:4px;box-sizing:border-box"></div>
<div class="t" style="left:1594.4px;top:672px;font-size:16.93px;font-weight:400;color:#f5d46a;-webkit-text-stroke:0.2px #f5d46a;">Partially Failed</div>
<svg class="s" style="left:1616px;top:746.5px;" width="22" height="22" viewBox="0 0 22 22" fill="none"><g stroke="#e5484d" stroke-width="1.6" fill="none"><circle cx="11.1" cy="10.5" r="8.4"/><line x1="11.1" y1="5.8" x2="11.1" y2="11.6" stroke-linecap="round"/></g><circle cx="11.1" cy="14.6" r="1.1" fill="#e5484d"/></svg>
<div class="t" style="left:1644.2px;top:750px;font-size:15.29px;font-weight:700;color:#e5484d;">Error</div>
<div class="t" style="left:1596.0px;top:439px;font-size:16.03px;font-weight:700;color:#9b9ba0;">No results yet</div>
<div class="r" style="left:1141px;top:553.5px;width:400px;height:69px;background:#30343e;border-radius:7px"></div>
<svg class="s" style="left:1332px;top:544.5px;" width="18" height="10" viewBox="0 0 18 10" fill="none"><path d="M0.5 9.5 L9 0.8 L17.5 9.5 Z" fill="#30343e"/></svg>
<div class="t" style="left:1158.0px;top:569px;font-size:16.85px;font-weight:400;color:#e4e4e8;-webkit-text-stroke:0.12px #e4e4e8;">This schedule is currently paused. Resume to</div>
<div class="t" style="left:1158.0px;top:593px;font-size:16.91px;font-weight:400;color:#e4e4e8;-webkit-text-stroke:0.12px #e4e4e8;">enable future runs.</div>
<div class="r" style="left:1152px;top:705.5px;width:400px;height:69px;background:#30343e;border-radius:7px"></div>
<svg class="s" style="left:1343.4px;top:696.5px;" width="18" height="10" viewBox="0 0 18 10" fill="none"><path d="M0.5 9.5 L9 0.8 L17.5 9.5 Z" fill="#30343e"/></svg>
<div class="t" style="left:1168.2px;top:721px;font-size:16.94px;font-weight:400;color:#e4e4e8;-webkit-text-stroke:0.12px #e4e4e8;">No more runs. Scheduled run was completed</div>
<div class="t" style="left:1168.2px;top:745px;font-size:16.94px;font-weight:400;color:#e4e4e8;-webkit-text-stroke:0.12px #e4e4e8;">after last run on Sep 8, 2025, 4:00 PM.</div>
<div class="r" style="left:1497.5px;top:780.4px;width:293px;height:58px;background:#30343e;border-radius:7px"></div>
<svg class="s" style="left:1635.3px;top:771.4px;" width="18" height="10" viewBox="0 0 18 10" fill="none"><path d="M0.5 9.5 L9 0.8 L17.5 9.5 Z" fill="#30343e"/></svg>
<div class="t" style="left:1513.7px;top:789px;font-size:16.98px;font-weight:400;color:#e4e4e8;-webkit-text-stroke:0.12px #e4e4e8;">Run did not complete due to an</div>
<div class="t" style="left:1513.7px;top:814px;font-size:16.97px;font-weight:400;color:#e4e4e8;-webkit-text-stroke:0.12px #e4e4e8;">execution error.</div>
<div class="t" style="left:472.8px;top:1056px;font-size:17.18px;font-weight:400;color:#9a9aa0;-webkit-text-stroke:0.05px #9a9aa0;">Showing 1-4 of 4</div>
<div class="r" style="left:619px;top:1046px;width:177px;height:36px;background:#191d26;border-radius:6px;"></div>
<div class="t" style="left:635.0px;top:1056px;font-size:16.19px;font-weight:700;color:#f2f2f2;">10 per page</div>
<svg class="s" style="left:762px;top:1058px;" width="15" height="13" viewBox="0 0 15 13" fill="none"><path d="M1.8 2 H13 L7.4 10.6 Z" fill="#ffffff" stroke="#ffffff" stroke-width="1" stroke-linejoin="round"/></svg>
<svg class="s" style="left:1740px;top:1055px;" width="140" height="20" viewBox="0 0 140 20" fill="none"><g transform="translate(-1740,-1055)" stroke="#8a8a90" stroke-width="1.5" fill="none" stroke-linecap="round" stroke-linejoin="round"><path d="M1749.4 1058 L1743.4 1064.3 L1749.4 1070.6"/><path d="M1755.2 1058 L1749.2 1064.3 L1755.2 1070.6"/><path d="M1791.2 1059.3 L1785.9 1064.6 L1791.2 1069.9"/><path d="M1827.4 1059.3 L1832.7 1064.6 L1827.4 1069.9"/><path d="M1863.3 1058 L1869.3 1064.3 L1863.3 1070.6"/><path d="M1869.1 1058 L1875.1 1064.3 L1869.1 1070.6"/></g></svg>
</body></html>
